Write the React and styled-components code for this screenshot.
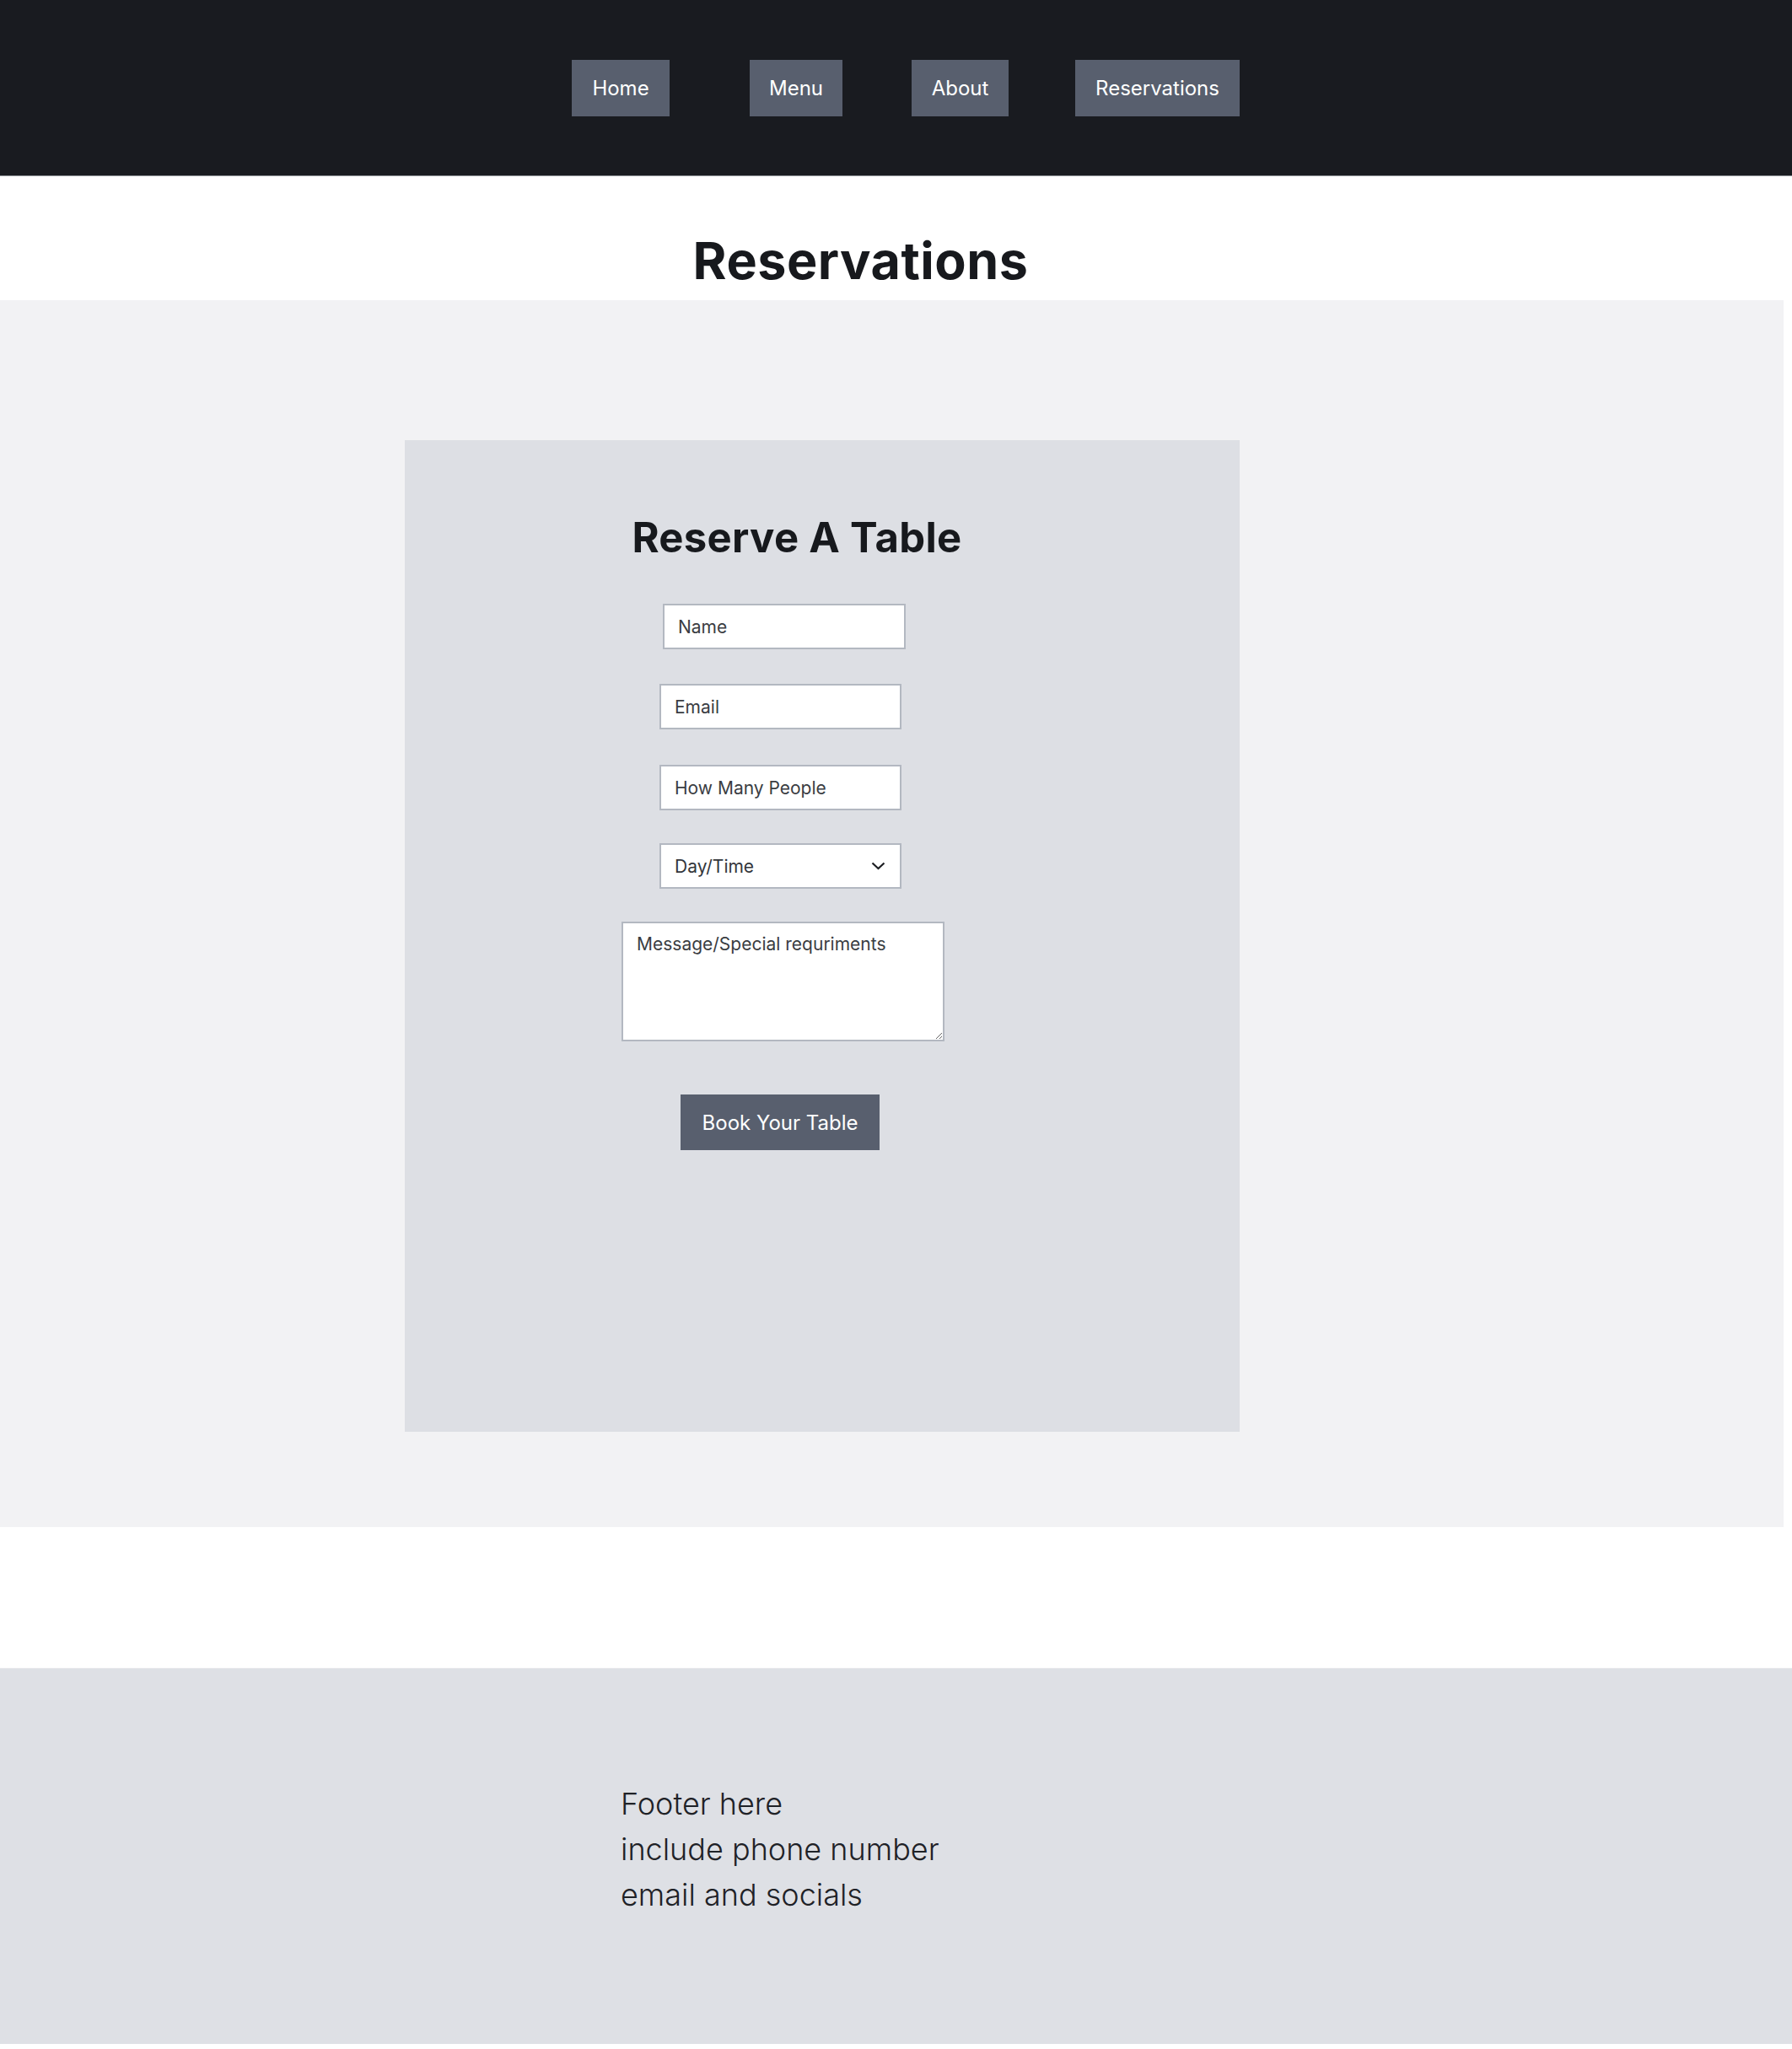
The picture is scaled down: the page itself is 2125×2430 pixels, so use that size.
import React from "react";
import styled, { createGlobalStyle } from "styled-components";

const Global = createGlobalStyle`
  html, body { margin: 0; padding: 0; background: #ffffff; }
  body { font-family: Inter, "Liberation Sans", Arial, sans-serif; color: #17191d; }
  * { box-sizing: border-box; }
`;

const Header = styled.header`
  height: 209px;
  background: #191b20;
  border-bottom: 1px solid #8e9095;
`;

const Nav = styled.nav`
  display: flex;
  align-items: flex-start;
  padding: 71px 0 0 678px;
`;

const NavButton = styled.a`
  display: flex;
  align-items: center;
  justify-content: center;
  height: 67px;
  width: ${(p) => p.$w}px;
  margin-left: ${(p) => p.$gap || 0}px;
  background: #585f6e;
  color: #ffffff;
  font-size: 24px;
  font-weight: 400;
  text-decoration: none;
`;

const TitleBar = styled.div`
  height: 147px;
  padding-top: 64px;
  padding-right: 84px;
  text-align: center;
`;

const PageTitle = styled.h1`
  margin: 0;
  font-size: 61px;
  line-height: 72px;
  font-weight: 700;
  letter-spacing: 0.5px;
  color: #17191d;
`;

const Section = styled.section`
  width: 2115px;
  background: #f2f2f4;
  padding: 166px 0 113px 480px;
`;

const Card = styled.div`
  width: 990px;
  height: 1176px;
  background: #dddfe4;
  padding-top: 85px;
`;

const CardTitle = styled.h2`
  margin: 0;
  padding-right: 60px;
  text-align: center;
  font-size: 49px;
  line-height: 61px;
  font-weight: 700;
  letter-spacing: 0.3px;
  color: #17191d;
`;

const Form = styled.form`
  display: flex;
  flex-direction: column;
  align-items: flex-start;
  padding-left: 302px;
`;

const fieldBase = `
  border: 2px solid #b3b8c1;
  background: #ffffff;
  font-family: Inter, "Liberation Sans", Arial, sans-serif;
  font-size: 21px;
  font-weight: 400;
  color: #33363b;
  outline: none;
  border-radius: 0;
  &::placeholder { color: #3a3d42; opacity: 1; }
`;

const Input = styled.input`
  ${fieldBase}
  display: block;
  width: ${(p) => p.$w || 287}px;
  height: 54px;
  padding: 0 16px;
  margin-top: ${(p) => p.$top}px;
  margin-left: ${(p) => p.$left || 0}px;
`;

const SelectWrap = styled.div`
  position: relative;
  width: 287px;
  height: 54px;
  margin-top: ${(p) => p.$top}px;
`;

const Select = styled.select`
  ${fieldBase}
  appearance: none;
  -webkit-appearance: none;
  width: 100%;
  height: 100%;
  padding: 0 16px;
`;

const Chevron = styled.svg`
  position: absolute;
  right: 19px;
  top: 22px;
  pointer-events: none;
`;

const TextArea = styled.textarea`
  ${fieldBase}
  display: block;
  width: 383px;
  height: 142px;
  padding: 10px 16px;
  line-height: 30px;
  margin-top: ${(p) => p.$top}px;
  margin-left: ${(p) => p.$left}px;
  resize: both;
`;

const Submit = styled.button`
  margin-top: ${(p) => p.$top}px;
  margin-left: ${(p) => p.$left}px;
  width: 236px;
  height: 66px;
  border: none;
  background: #585f6e;
  color: #ffffff;
  font-family: Inter, "Liberation Sans", Arial, sans-serif;
  font-size: 24px;
  font-weight: 400;
`;

const Spacer = styled.div`
  height: 167px;
`;

const Footer = styled.footer`
  height: 446px;
  background: #dee0e5;
  border-top: 1px solid #e8e9ec;
  padding: 133px 0 0 736px;
`;

const FooterLine = styled.p`
  margin: 0;
  font-size: 36px;
  line-height: 54px;
  font-weight: 300;
  color: #1f2227;
`;

const navItems = [
  { label: "Home", w: 116, gap: 0 },
  { label: "Menu", w: 110, gap: 95 },
  { label: "About", w: 115, gap: 82 },
  { label: "Reservations", w: 195, gap: 79 },
];

export default function App() {
  return (
    <>
      <Global />
      <Header>
        <Nav>
          {navItems.map((n) => (
            <NavButton key={n.label} href="#" $w={n.w} $gap={n.gap}>
              {n.label}
            </NavButton>
          ))}
        </Nav>
      </Header>
      <TitleBar>
        <PageTitle>Reservations</PageTitle>
      </TitleBar>
      <Section>
        <Card>
          <CardTitle>Reserve A Table</CardTitle>
          <Form onSubmit={(e) => e.preventDefault()}>
            <Input $top={48} $left={4} $w={288} placeholder="Name" />
            <Input $top={41} placeholder="Email" />
            <Input $top={42} placeholder="How Many People" />
            <SelectWrap $top={39}>
              <Select defaultValue="">
                <option value="">Day/Time</option>
              </Select>
              <Chevron width="17" height="10" viewBox="0 0 17 10">
                <path d="M1.5 1.5 L8.5 8 L15.5 1.5" fill="none" stroke="#1c1e22" strokeWidth="2.2" />
              </Chevron>
            </SelectWrap>
            <TextArea $top={39} $left={-45} placeholder="Message/Special requriments" />
            <Submit $top={63} $left={25} type="submit">
              Book Your Table
            </Submit>
          </Form>
        </Card>
      </Section>
      <Spacer />
      <Footer>
        <FooterLine>Footer here</FooterLine>
        <FooterLine>include phone number</FooterLine>
        <FooterLine>email and socials</FooterLine>
      </Footer>
    </>
  );
}
